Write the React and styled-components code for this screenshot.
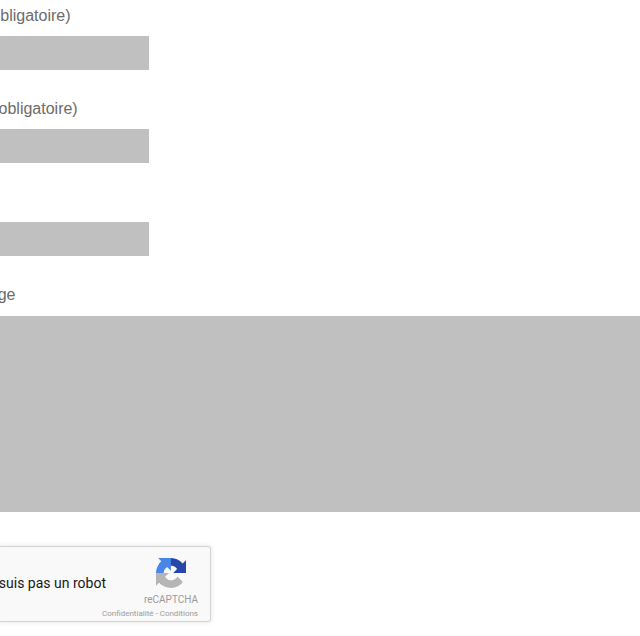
import React from "react";
import styled, { createGlobalStyle } from "styled-components";

const GlobalStyle = createGlobalStyle`
  * { box-sizing: border-box; }
  body { margin: 0; background: #fff; }
`;

const Form = styled.form`
  display: flex;
  flex-direction: column;
  width: 640px;
  height: 636px;
  overflow: hidden;
  font-family: "Liberation Sans", Arial, sans-serif;
`;

const Field = styled.div`
  display: flex;
  flex-direction: column;
  flex: none;
  height: 93px;
`;

const Label = styled.label`
  display: flex;
  justify-content: flex-end;
  width: ${(p) => p.$width}px;
  height: 36px;
  padding-top: 4px;
  font-size: 16px;
  line-height: 24px;
  white-space: nowrap;
  color: #6b6b6b;
`;

const Input = styled.input`
  width: 149px;
  height: 34px;
  padding: 0;
  border: 0;
  border-radius: 0;
  outline: 0;
  background: #c0c0c0;
`;

const MessageField = styled(Field)`
  height: 267px;
`;

const Message = styled.textarea`
  display: block;
  width: 640px;
  height: 196px;
  margin-top: 1px;
  padding: 0;
  border: 0;
  border-radius: 0;
  outline: 0;
  resize: none;
  background: #c0c0c0;
`;

const Captcha = styled.div`
  display: flex;
  flex: none;
  justify-content: space-between;
  width: 211px;
  height: 76px;
  border: 1px solid #d3d3d3;
  border-left: 0;
  border-radius: 0 3px 3px 0;
  background: #f9f9f9;
  box-shadow: 0 0 4px 1px rgba(0, 0, 0, 0.08);
  font-family: Roboto, sans-serif;
`;

const CaptchaLabel = styled.span`
  display: flex;
  justify-content: flex-end;
  width: 106px;
  margin-right: -4px;
  padding-top: 28px;
  font-size: 14px;
  line-height: 17px;
  white-space: nowrap;
  color: #181818;
`;

const Brand = styled.div`
  display: flex;
  flex-direction: column;
  align-items: flex-end;
  padding: 11px 12px 0 0;
  color: #9b9b9b;
`;

const Logo = styled.svg`
  width: 30px;
  height: 30px;
  margin-right: 12px;
`;

const BrandName = styled.div`
  margin-top: 5px;
  font-size: 10px;
  line-height: 14px;
`;

const Legal = styled.div`
  margin-top: 2px;
  font-size: 8px;
  line-height: 10px;
  white-space: nowrap;
`;

export default function App() {
  return (
    <>
      <GlobalStyle />
      <Form>
        <Field>
          <Label $width={70.5}>bligatoire)</Label>
          <Input />
        </Field>
        <Field>
          <Label $width={77.7}>obligatoire)</Label>
          <Input />
        </Field>
        <Field>
          <Label $width={78} />
          <Input />
        </Field>
        <MessageField>
          <Label $width={15.5}>ge</Label>
          <Message />
        </MessageField>
        <Captcha>
          <CaptchaLabel>suis pas un robot</CaptchaLabel>
          <Brand>
            <Logo viewBox="0 0 64 64" aria-hidden="true">
              <path fill="#2846a8" d="M64 31.955l-.033-1.37V4.687l-7.16 7.16C50.948 4.674 42.033.093 32.05.093c-10.4 0-19.622 4.96-25.458 12.64l11.736 11.86a15.55 15.55 0 0 1 4.754-5.334c2.05-1.6 4.952-2.906 8.968-2.906.485 0 .86.057 1.135.163 4.976.393 9.288 3.14 11.828 7.124l-8.307 8.307L64 31.953" />
              <path fill="#4a86ea" d="M31.862.094l-1.37.033H4.594l7.16 7.16C4.58 13.147 0 22.06 0 32.046c0 10.4 4.96 19.622 12.64 25.458L24.5 45.768a15.55 15.55 0 0 1-5.334-4.754c-1.6-2.05-2.906-4.952-2.906-8.968 0-.485.057-.86.163-1.135.393-4.976 3.14-9.288 7.124-11.828l8.307 8.307L31.86.095" />
              <path fill="#b5b5b5" d="M.001 32.045l.033 1.37v25.898l7.16-7.16c5.86 7.173 14.774 11.754 24.76 11.754 10.4 0 19.622-4.96 25.458-12.64l-11.736-11.86a15.55 15.55 0 0 1-4.754 5.334c-2.05 1.6-4.952 2.906-8.968 2.906-.485 0-.86-.057-1.135-.163-4.976-.393-9.288-3.14-11.828-7.124l8.307-8.307c-10.522.04-22.4.066-27.295-.005" />
            </Logo>
            <BrandName>reCAPTCHA</BrandName>
            <Legal>Confidentialité - Conditions</Legal>
          </Brand>
        </Captcha>
      </Form>
    </>
  );
}
